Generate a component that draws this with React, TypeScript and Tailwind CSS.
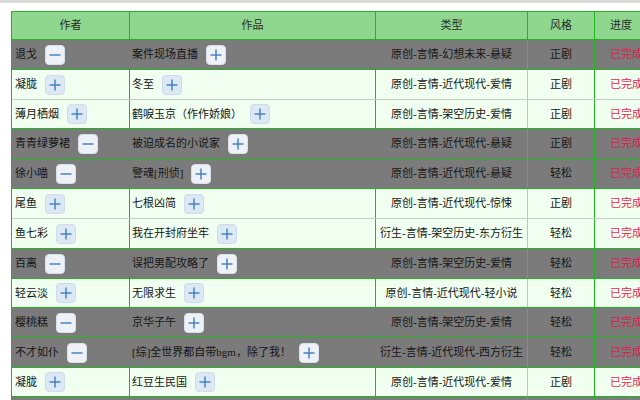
import React from "react";

type Row = {
  author: string;
  aMinus: boolean;
  work: string;
  type: string;
  style: string;
  gray: boolean;
  h: number;
};

const rows: Row[] = [
  { author: "退戈", aMinus: true, work: "案件现场直播", type: "原创-言情-幻想未来-悬疑", style: "正剧", gray: true, h: 30 },
  { author: "凝胧", aMinus: false, work: "冬至", type: "原创-言情-近代现代-爱情", style: "正剧", gray: false, h: 30 },
  { author: "薄月栖烟", aMinus: false, work: "鹤唳玉京（作作娇娘）", type: "原创-言情-架空历史-爱情", style: "正剧", gray: false, h: 29 },
  { author: "青青绿萝裙", aMinus: true, work: "被迫成名的小说家", type: "原创-言情-近代现代-悬疑", style: "正剧", gray: true, h: 30 },
  { author: "徐小喵", aMinus: true, work: "警魂[刑侦]", type: "原创-言情-近代现代-悬疑", style: "轻松", gray: true, h: 30 },
  { author: "尾鱼", aMinus: false, work: "七根凶简", type: "原创-言情-近代现代-惊悚", style: "正剧", gray: false, h: 30 },
  { author: "鱼七彩", aMinus: false, work: "我在开封府坐牢", type: "衍生-言情-架空历史-东方衍生", style: "轻松", gray: false, h: 30 },
  { author: "百离", aMinus: true, work: "误把男配攻略了", type: "原创-言情-架空历史-爱情", style: "轻松", gray: true, h: 30 },
  { author: "轻云淡", aMinus: false, work: "无限求生", type: "原创-言情-近代现代-轻小说", style: "轻松", gray: false, h: 29 },
  { author: "樱桃糕", aMinus: true, work: "京华子午", type: "原创-言情-架空历史-爱情", style: "轻松", gray: true, h: 30 },
  { author: "不才如仆", aMinus: true, work: "[综]全世界都自带bgm，除了我！", type: "衍生-言情-近代现代-西方衍生", style: "轻松", gray: true, h: 30 },
  { author: "凝胧", aMinus: false, work: "红豆生民国", type: "原创-言情-近代现代-爱情", style: "正剧", gray: false, h: 29 },
  { author: "", aMinus: false, work: "", type: "", style: "", gray: true, h: 30 },
];

function Btn({ minus, gray }: { minus: boolean; gray: boolean }) {
  return (
    <span
      className={
        "ml-2 inline-flex h-[20px] w-[20px] shrink-0 items-center justify-center rounded-[4px] border " +
        (gray ? "bg-[#eef2f7] border-[#d8e0ea]" : "bg-[#dce8f4] border-[#cddbea]")
      }
    >
      <svg width="14" height="14" viewBox="0 0 14 14">
        <line x1="1.5" y1="7" x2="12.5" y2="7" stroke="#3d7cc0" strokeWidth="1.4" />
        {!minus && <line x1="7" y1="1.5" x2="7" y2="12.5" stroke="#3d7cc0" strokeWidth="1.4" />}
      </svg>
    </span>
  );
}

export default function App() {
  return (
    <div
      className="w-[640px] h-[400px] overflow-hidden bg-white"
      style={{ fontFamily: '"Liberation Serif", "Noto Sans CJK SC", serif' }}
    >
      <div className="h-[3px] bg-[#d9d9d9]" />
      <div className="pl-[11px] pt-[8px]">
        <div className="w-[680px] border-l border-t border-[#22b422] text-[11px]">
          <div className="flex h-[28px] border-b border-[#22b422] bg-[#8fd78f] text-[#2a2a2a]">
            <div className="flex w-[118px] shrink-0 items-center justify-center border-r border-[#22b422]">作者</div>
            <div className="flex w-[246px] shrink-0 items-center justify-center border-r border-[#22b422]">作品</div>
            <div className="flex w-[152px] shrink-0 items-center justify-center border-r border-[#22b422]">类型</div>
            <div className="flex w-[67px] shrink-0 items-center justify-center border-r border-[#22b422]">风格</div>
            <div className="flex w-[80px] shrink-0 items-center border-r border-[#22b422] pl-[15px]">进度</div>
          </div>
          {rows.map((r, i) => {
            const next = rows[i + 1];
            const greenBottom = r.gray || (next ? next.gray : false);
            return (
              <div
                key={i}
                className={
                  "flex border-b text-[#161616] " +
                  (r.h === 30 ? "h-[30px] " : "h-[29px] ") +
                  (greenBottom ? "border-[#22b422] " : "border-[#c6cec6] ") +
                  (r.gray ? "bg-[#7b7b7b]" : "bg-[#f0fff0]")
                }
              >
                <div className="flex w-[118px] shrink-0 items-center border-r border-[#22b422] pl-[3px]">
                  {r.author && (
                    <>
                      <span>{r.author}</span>
                      <Btn minus={r.aMinus} gray={r.gray} />
                    </>
                  )}
                </div>
                <div className="flex w-[246px] shrink-0 items-center border-r border-[#22b422] pl-[2px]">
                  {r.work && (
                    <>
                      <span>{r.work}</span>
                      <Btn minus={false} gray={r.gray} />
                    </>
                  )}
                </div>
                <div
                  className={
                    "flex w-[152px] shrink-0 items-center justify-center border-r " +
                    (r.gray ? "border-[#8c8c8c]" : "border-[#c0c4c0]")
                  }
                >
                  {r.type}
                </div>
                <div className="flex w-[67px] shrink-0 items-center justify-center border-r border-[#22b422]">{r.style}</div>
                <div
                  className={
                    "flex w-[80px] shrink-0 items-center border-r border-[#22b422] pl-[15px] " +
                    (r.gray ? "text-[#d81f4a]" : "text-[#e8264f]")
                  }
                >
                  {r.author ? "已完成" : ""}
                </div>
              </div>
            );
          })}
        </div>
      </div>
    </div>
  );
}
